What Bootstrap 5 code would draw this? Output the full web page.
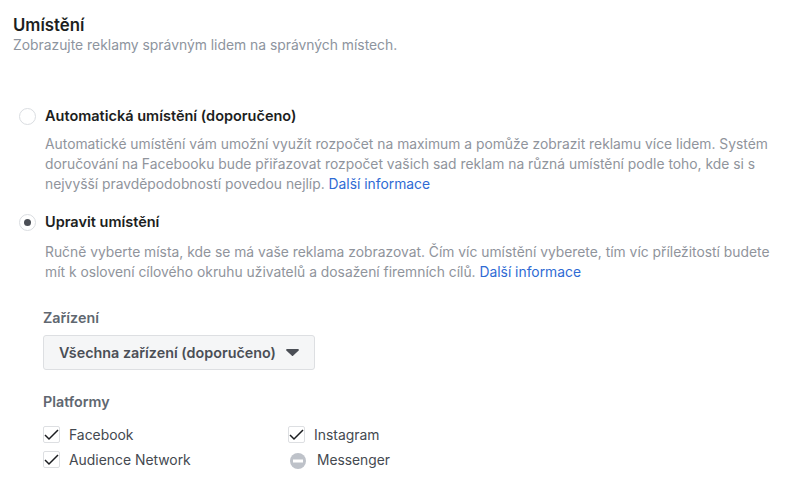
<!DOCTYPE html>
<html lang="cs"><head><meta charset="utf-8">
<link href="https://cdn.jsdelivr.net/npm/bootstrap@5.3.0/dist/css/bootstrap.min.css" rel="stylesheet">
<style>
html,body{height:100%;overflow:hidden}
body{background:#fff;font-family:Inter,"Liberation Sans",sans-serif;color:#1c1e21;font-size:13.9px}
.page{padding:15px 0 0 13px;width:790px}
.ttl{font-size:16.8px;line-height:20px;color:#1c1e21;margin:0}
.sub{font-size:13.87px;line-height:18px;color:#8d949e;margin:1px 0 0}
.opt{height:20px;margin-left:6px}
.opt1{margin-top:52px}
.opt2{margin-top:18px}
.rad{width:17px;height:17px;border:1px solid #dadde1;background:#fff;margin-right:9px}
.rad.on::after{content:"";width:7px;height:7px;border-radius:50%;background:#4b4f56}
.olab{font-size:14.5px;color:#1c1e21}
.desc{margin:8px 0 0 32px;width:745px;color:#90949c;font-size:13.85px;line-height:20px}
.desc2{margin-top:10px}
.desc a{color:#2f6bd4}
.sect{margin:27px 0 0 30px}
.hd{font-size:14.3px;color:#606770;line-height:18px}
.ddb{margin-top:8px;height:35px;width:272px;padding:0 15px;background:#f5f6f7;border:1px solid #dddfe2;border-radius:3px;font-size:14.35px;font-weight:600;color:#4b4f56;line-height:1.5}
.caret{width:13px;height:7px;margin-left:10px}
.plat{margin-top:23px}
.pgrid{display:grid;grid-template-columns:245px 1fr;margin-top:15px;row-gap:6px}
.pit{height:19px;color:#444950;font-size:13.9px}
.cb{width:17px;height:17px;border:1px solid #dddfe2;border-radius:2px;margin:0 9px 2px 0}
.blk{width:16px;height:16px;margin:0 11px 0 2px}
.mes{font-size:13.8px}
</style></head><body>
<div class="page">
<h1 class="ttl fw-semibold">Umístění</h1>
<p class="sub">Zobrazujte reklamy správným lidem na správných místech.</p>
<div class="opt opt1 d-flex align-items-center"><span class="rad rounded-circle flex-shrink-0"></span><span class="olab fw-semibold">Automatická umístění (doporučeno)</span></div>
<div class="desc text-nowrap">Automatické umístění vám umožní využít rozpočet na maximum a pomůže zobrazit reklamu více lidem. Systém<br>doručování na Facebooku bude přiřazovat rozpočet vašich sad reklam na různá umístění podle toho, kde si s<br>nejvyšší pravděpodobností povedou nejlíp. <a href="#" class="text-decoration-none">Další informace</a></div>
<div class="opt opt2 d-flex align-items-center"><span class="rad on rounded-circle flex-shrink-0 d-flex align-items-center justify-content-center"></span><span class="olab fw-semibold">Upravit umístění</span></div>
<div class="desc desc2 text-nowrap">Ručně vyberte místa, kde se má vaše reklama zobrazovat. Čím víc umístění vyberete, tím víc příležitostí budete<br>mít k oslovení cílového okruhu uživatelů a dosažení firemních cílů. <a href="#" class="text-decoration-none">Další informace</a></div>
<div class="sect">
<div class="hd fw-semibold">Zařízení</div>
<button type="button" class="btn ddb d-inline-flex align-items-center text-nowrap">Všechna zařízení (doporučeno)<svg class="caret flex-shrink-0" viewBox="0 0 13 7"><path d="M1 0h11a1 1 0 0 1 .7 1.6L7.3 6.6a1 1 0 0 1-1.6 0L.3 1.6A1 1 0 0 1 1 0z" fill="#4b4f56"/></svg></button>
<div class="hd plat fw-semibold">Platformy</div>
<div class="pgrid">
<div class="pit d-flex align-items-center"><span class="cb flex-shrink-0 d-flex align-items-center justify-content-center"><svg width="15" height="12" viewBox="0 0 15 12"><path d="M1 6l4 4 9-9" fill="none" stroke="#1c1e21" stroke-width="1.5"/></svg></span>Facebook</div>
<div class="pit d-flex align-items-center"><span class="cb flex-shrink-0 d-flex align-items-center justify-content-center"><svg width="15" height="12" viewBox="0 0 15 12"><path d="M1 6l4 4 9-9" fill="none" stroke="#1c1e21" stroke-width="1.5"/></svg></span>Instagram</div>
<div class="pit d-flex align-items-center"><span class="cb flex-shrink-0 d-flex align-items-center justify-content-center"><svg width="15" height="12" viewBox="0 0 15 12"><path d="M1 6l4 4 9-9" fill="none" stroke="#1c1e21" stroke-width="1.5"/></svg></span>Audience Network</div>
<div class="pit mes d-flex align-items-center"><svg class="blk flex-shrink-0" viewBox="0 0 16 16"><circle cx="8" cy="8" r="8" fill="#bec2c9"/><rect x="3" y="6.5" width="10" height="3" fill="#fff"/></svg>Messenger</div>
</div>
</div>
</div>
<script src="https://cdn.jsdelivr.net/npm/bootstrap@5.3.0/dist/js/bootstrap.bundle.min.js"></script>
</body></html>
